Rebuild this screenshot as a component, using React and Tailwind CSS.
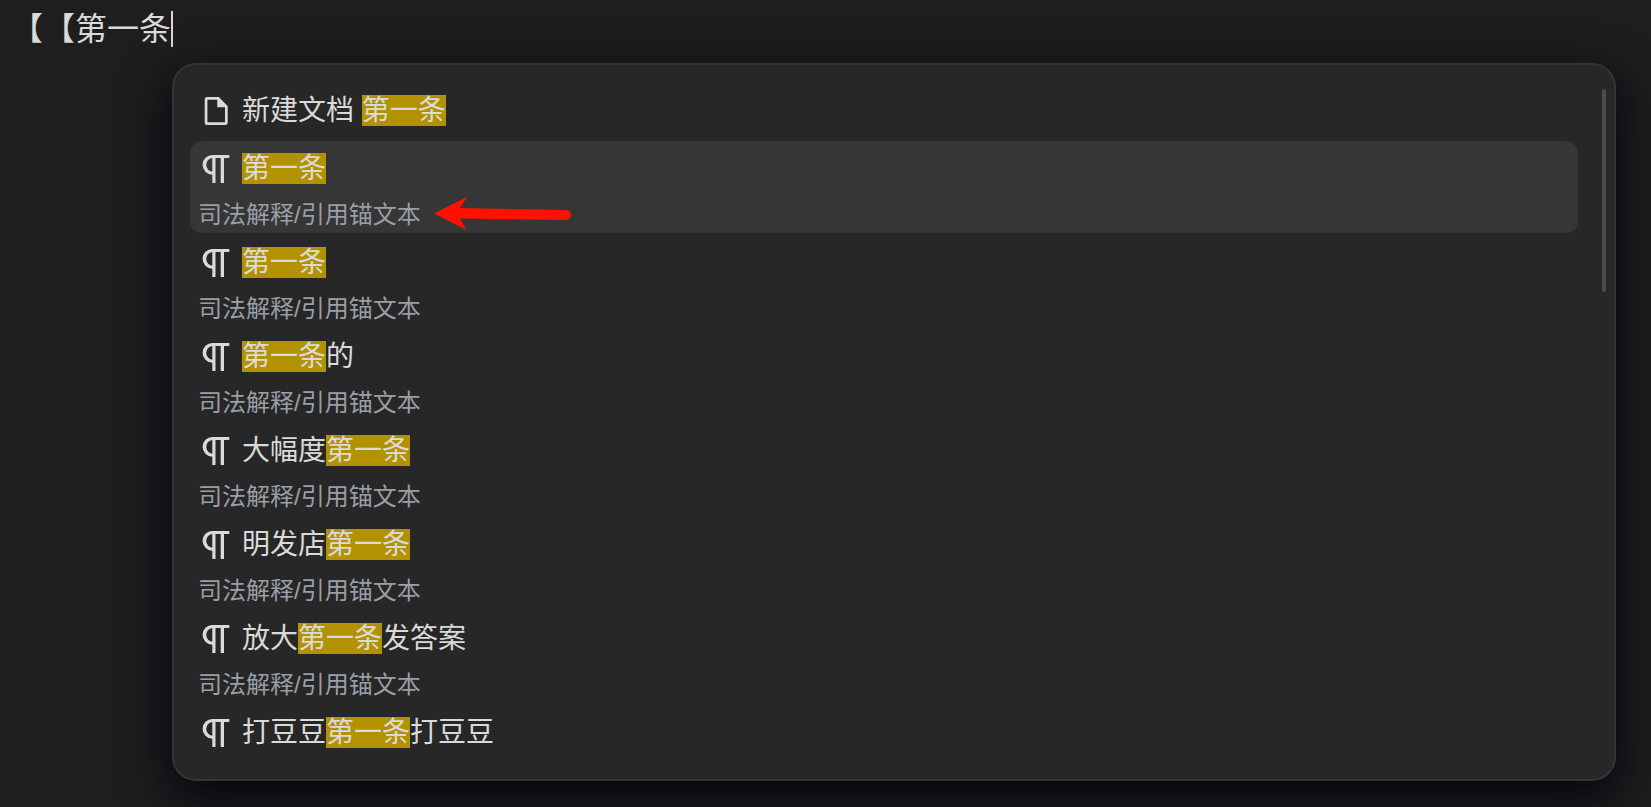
const KEYWORD = '第一条';

const blocks = [
    { id: 1, before: '', after: '', path: '司法解释/引用锚文本', arrow: true },
    { id: 2, before: '', after: '', path: '司法解释/引用锚文本' },
    { id: 3, before: '', after: '的', path: '司法解释/引用锚文本' },
    { id: 4, before: '大幅度', after: '', path: '司法解释/引用锚文本' },
    { id: 5, before: '明发店', after: '', path: '司法解释/引用锚文本' },
    { id: 6, before: '放大', after: '发答案', path: '司法解释/引用锚文本' },
    { id: 7, before: '打豆豆', after: '打豆豆' },
];

function FileIcon() {
    return (
        <svg viewBox="0 0 28 28" className="w-7 h-7 shrink-0" fill="currentColor" aria-hidden="true">
            <path
                fillRule="evenodd"
                d="M5 0H16.700L25.700 9V25.500Q25.700 28 23.200 28H5.200Q2.700 28 2.700 25.500V2.500Q2.700 0 5.200 0ZM5.400 2.700V25.300H23V10.300H15.300V2.700Z"
            />
        </svg>
    );
}

function ParagraphIcon() {
    return (
        <svg viewBox="0 0 28 28" className="w-7 h-7 shrink-0" fill="currentColor" aria-hidden="true">
            <path
                fillRule="evenodd"
                d="M10.500 0H27.300V3H22V28H18.700V3H13.500V28H10.300V19.700A9.850 9.850 0 0 1 10.500 0ZM10.300 3A6.900 6.900 0 0 0 10.300 16.700Z"
            />
        </svg>
    );
}

function Arrow() {
    return (
        <svg viewBox="0 0 138 36" className="w-[138px] h-9 shrink-0" fill="#ff1100" aria-hidden="true">
            <path d="M0 16.500L33 0L26 11L132 13A5 5 0 0 1 132 23L26 21.500L32.500 33Z" />
        </svg>
    );
}

function Title({ icon, before, after }) {
    return (
        <span className="flex items-center gap-3 h-[31px] pl-3 text-[28px] leading-[31px] text-[#dadada]">
            {icon}
            <span className="whitespace-pre">
                {before}
                <mark className="inline-block bg-[#b39200] text-[#dadada]">{KEYWORD}</mark>
                {after}
            </span>
        </span>
    );
}

export default function App() {
    return (
        <div className="h-screen flex flex-col overflow-hidden bg-[#1e1e1e] font-['Liberation_Sans','Noto_Sans_CJK_SC',sans-serif]">
            <div
                role="textbox"
                aria-label="编辑器"
                className="flex items-center shrink-0 h-[63px] pl-[11px] pb-[5px] text-[32px] leading-9 text-[#dadada]"
            >
                <span className="[text-spacing-trim:space-all]">【【{KEYWORD}</span>
                <span className="w-0.5 h-9 bg-[#dadada]" />
            </div>

            <div className="flex flex-1 min-h-0 ml-[172px] mr-[35px] mb-[26px] py-[18px] pl-4 pr-2 rounded-3xl border-2 border-[#343434] bg-[#272727] shadow-[0_16px_48px_4px_#04070e]">
                <ul className="flex-1 flex flex-col gap-0.5 overflow-hidden">
                    <li>
                        <button type="button" className="flex flex-col w-full h-14 pt-3 text-left rounded-xl">
                            <Title icon={<FileIcon />} before="新建文档 " after="" />
                        </button>
                    </li>
                    {blocks.map((block) => (
                        <li key={block.id}>
                            <button
                                type="button"
                                className={`flex flex-col w-full pt-3 text-left rounded-xl ${block.path ? 'h-[92px]' : 'h-14'} ${block.arrow ? 'bg-[#363636]' : ''}`}
                            >
                                <Title icon={<ParagraphIcon />} before={block.before} after={block.after} />
                                {block.path && (
                                    <span className="flex items-center gap-[13px] mt-3.5 pl-2 h-[34px] text-2xl text-[#999fa6]">
                                        {block.path}
                                        {block.arrow && <Arrow />}
                                    </span>
                                )}
                            </button>
                        </li>
                    ))}
                </ul>
                <div className="w-1 h-[203px] mt-1.5 ml-6 rounded-full bg-[#4b4b4b]" />
            </div>
        </div>
    );
}
